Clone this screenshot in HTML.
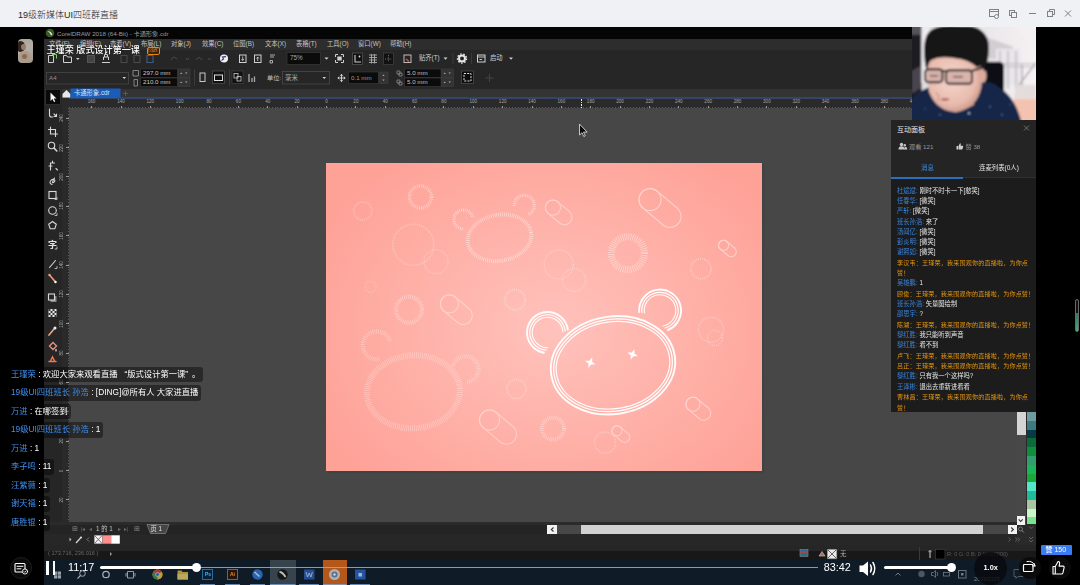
<!DOCTYPE html>
<html lang="zh-CN">
<head>
<meta charset="utf-8">
<title>19级新媒体UI四班群直播</title>
<style>
*{box-sizing:border-box;margin:0;padding:0}
html,body{width:1080px;height:585px;overflow:hidden;background:#000}
body{font-family:"Liberation Sans","Noto Sans CJK SC",sans-serif;color:#fff;position:relative}
.abs{position:absolute}
.abs *{position:absolute}
svg{position:absolute;overflow:visible}
span.t{position:static}
#topbar{left:0;top:0;width:1080px;height:27px;background:#eff1f4}
#topbar .title{left:18px;top:7.600px;font-size:9px;line-height:14px;color:#23262b;font-weight:300;white-space:nowrap}
#stage{left:0;top:0;width:1080px;height:585px;overflow:hidden}
#screen{left:44px;top:27px;width:992px;height:558px;background:#474747;overflow:hidden}
#in{left:-44px;top:-27px;width:1080px;height:585px;filter:blur(.5px)}
.tx{white-space:nowrap;line-height:1;color:#bdbdbd;font-size:6.3px}
.chat{left:8px;height:15.400px;padding:0 3px;border-radius:3px;background:rgba(0,0,0,.42);font-size:8.300px;line-height:15.400px;white-space:nowrap;color:#fff;filter:blur(.25px)}
</style>
</head>
<body>
<div id="topbar" class="abs">
  <div class="title">19级新媒体UI四班群直播</div>
  <svg style="left:986px;top:5px" width="90" height="18" viewBox="986 5 90 18" fill="none" stroke="#7c828a" stroke-width="1">
    <rect x="989.5" y="9.500" width="9" height="7"/><line x1="989.5" y1="11.500" x2="998.500" y2="11.500"/><circle cx="996.500" cy="16.500" r="2" fill="#eff1f4"/>
    <rect x="1009.5" y="10.500" width="5" height="5"/><rect x="1011.5" y="12.500" width="5" height="5" fill="#eff1f4"/>
    <line x1="1029" y1="13.500" x2="1036" y2="13.500"/>
    <rect x="1047.5" y="11.500" width="5" height="5"/><path d="M1049.5 11.500v-2h5v5h-2"/>
    <path d="M1065 10.500l6 6M1071 10.500l-6 6"/>
  </svg>
</div>
<div id="stage" class="abs">
<div id="screen" class="abs"><div id="in" class="abs">
<div style="left:44px;top:27px;width:992px;height:11.5px;background:#050505;"></div>
<div style="left:44px;top:38.5px;width:992px;height:11.5px;background:#2d2d2d;"></div>
<div style="left:44px;top:50px;width:992px;height:16.5px;background:#262626;"></div>
<div style="left:44px;top:66.5px;width:992px;height:22px;background:#262626;"></div>
<div style="left:44px;top:88.5px;width:992px;height:9px;background:#343434;"></div>
<div style="left:44px;top:97.2px;width:992px;height:1.8px;background:#33466a;"></div>
<div style="left:44px;top:99px;width:992px;height:9.3px;background:#2a2a2a;"></div>
<svg style="left:45px;top:28px" width="10" height="10" viewBox="0 0 10 10"><circle cx="5" cy="5" r="4.300" fill="#3a5c26"/><path d="M2.500 3.500Q5 2 7.500 6.500L6 7.500Q5 4 2.500 3.500z" fill="#e8f0e0"/></svg>
<div class="tx" style="left:57px;top:30.70px;font-size:6.2px;color:#9a9a9a;">CorelDRAW 2018 (64-Bit) - 卡通形象.cdr</div>
<div class="tx" style="left:49px;top:41.15px;font-size:6.3px;color:#c4c4c4;">文件(F)</div>
<div class="tx" style="left:80px;top:41.15px;font-size:6.3px;color:#c4c4c4;">编辑(E)</div>
<div class="tx" style="left:110px;top:41.15px;font-size:6.3px;color:#c4c4c4;">查看(V)</div>
<div class="tx" style="left:141px;top:41.15px;font-size:6.3px;color:#c4c4c4;">布局(L)</div>
<div class="tx" style="left:171px;top:41.15px;font-size:6.3px;color:#c4c4c4;">对象(J)</div>
<div class="tx" style="left:202px;top:41.15px;font-size:6.3px;color:#c4c4c4;">效果(C)</div>
<div class="tx" style="left:233px;top:41.15px;font-size:6.3px;color:#c4c4c4;">位图(B)</div>
<div class="tx" style="left:265px;top:41.15px;font-size:6.3px;color:#c4c4c4;">文本(X)</div>
<div class="tx" style="left:296px;top:41.15px;font-size:6.3px;color:#c4c4c4;">表格(T)</div>
<div class="tx" style="left:327px;top:41.15px;font-size:6.3px;color:#c4c4c4;">工具(O)</div>
<div class="tx" style="left:358px;top:41.15px;font-size:6.3px;color:#c4c4c4;">窗口(W)</div>
<div class="tx" style="left:390px;top:41.15px;font-size:6.3px;color:#c4c4c4;">帮助(H)</div>
<svg style="left:0;top:0" width="1080" height="585" viewBox="0 0 1080 585" fill="none" stroke="#d0d0d0" stroke-width="1">
<!-- standard toolbar y 50-66, centre 58.5 -->
<g>
<path d="M48.500 55.500h5v7h-5z"/><path d="M52 54.500h4.500v4" stroke="#7fd06a"/>
<path d="M63.500 62.500v-7h3l1 1.500h4v5.500z"/><path d="M76 58l1.800 2 1.800-2z" fill="#cfcfcf" stroke="none"/>
<rect x="87.500" y="55.500" width="7" height="7" stroke="#555" fill="#444"/>
<path d="M102 62.500h8M103.500 60v-3h5v3M104.500 57v-2.500h3v2.500"/>
<g stroke="#4a4a4a"><rect x="121" y="55.500" width="6" height="7"/><rect x="134" y="55.500" width="6" height="7"/><rect x="147" y="55.500" width="6" height="7" stroke="#40608a"/><path d="M171 60q2-5 6-1M186 58l1.500 2 1.500-2M196 60q3-5 6 0M208 58l1.500 2 1.500-2"/></g>
<circle cx="224" cy="58.500" r="4" fill="#f2f2f2" stroke="none"/><path d="M221.500 60.500l2-1.500-1-2 3.500-0.500" stroke="#5a3aa0" stroke-width="1.300"/>
<rect x="239.500" y="55" width="6.500" height="7.500"/><path d="M242.700 56.500v4M241.500 59l1.200 1.500 1.200-1.500" stroke-width=".8"/>
<rect x="254.500" y="55" width="6.500" height="7.500"/><path d="M257.700 61v-4M256.500 58.500l1.200-1.500 1.200 1.500" stroke-width=".8"/>
<path d="M270 55h5M270 57h4M270 60.500h2.500v2.500h-2.500z" stroke="#bbb" stroke-width=".9"/>
<rect x="287" y="52.500" width="33.500" height="12" fill="#0b0b0b" stroke="#3a3a3a" stroke-width=".7"/>
<path d="M324.500 57.500l2 2.300 2-2.300z" fill="#cfcfcf" stroke="none"/>
<path d="M335.500 57v-2.500h2.500M341 54.500h2.500v2.500M343.500 60v2.500h-2.500M338 62.500h-2.500v-2.500"/><rect x="337.300" y="56.500" width="4.400" height="4" fill="#d0d0d0" stroke="none"/>
<rect x="352.500" y="53" width="10" height="11.500" fill="#111" stroke="#5a5a5a" stroke-width=".7"/><path d="M355 55v7h6" stroke-width="1.100"/><circle cx="359.500" cy="56.500" r=".9" fill="#ddd" stroke="none"/>
<path d="M369 55h8M369 57.500h8M369 60h8M369 62.500h8M371.500 54v9.500M374.500 54v9.500" stroke="#aaa" stroke-width=".9"/>
<rect x="383.500" y="53" width="10" height="11.500" fill="#111" stroke="#444" stroke-width=".7"/><path d="M385 59h7M388.500 55v7" stroke="#777" stroke-width=".8" stroke-dasharray="1.200 1"/>
<rect x="404" y="55" width="7" height="7.500" stroke="#bbb"/><path d="M406 59l3 2.500" stroke="#e05050" stroke-width="1.300"/>
<path d="M443.500 57.500l2 2.300 2-2.300z" fill="#cfcfcf" stroke="none"/>
<line x1="453" y1="53" x2="453" y2="64" stroke="#3a3a3a"/>
<circle cx="462" cy="58.500" r="3" stroke="#e8e8e8" stroke-width="2"/><circle cx="462" cy="58.500" r="4.600" stroke="#e8e8e8" stroke-width="1.200" stroke-dasharray="1.600 1.600"/>
<line x1="471.500" y1="53" x2="471.500" y2="64" stroke="#3a3a3a"/>
<rect x="477.500" y="55" width="7.500" height="7"/><path d="M477.500 57h7.500M479.500 59.500h2.500" stroke-width=".9"/>
<path d="M509 57.500l2 2.300 2-2.300z" fill="#cfcfcf" stroke="none"/>
</g>
<!-- property bar y 66.5-88.5 -->
<g>
<rect x="46.500" y="72.500" width="82" height="11.500" fill="#262626" stroke="#474747" stroke-width=".8"/>
<path d="M122.500 77l1.800 2 1.800-2z" fill="#cfcfcf" stroke="none"/>
<path d="M133 70.500h5.500v5.500h-5.500z" stroke="#999" stroke-width=".8"/><path d="M134 79.500h3.500v6.500h-3.500z" stroke="#999" stroke-width=".8"/>
<rect x="140.500" y="69" width="37" height="8.500" fill="#0b0b0b" stroke="#3c3c3c" stroke-width=".6"/>
<rect x="140.500" y="78" width="37" height="8.500" fill="#0b0b0b" stroke="#3c3c3c" stroke-width=".6"/>
<rect x="178" y="69" width="12" height="8.500" fill="#333" stroke="#414141" stroke-width=".6"/>
<rect x="178" y="78" width="12" height="8.500" fill="#333" stroke="#414141" stroke-width=".6"/>
<path d="M180 74l1.200-1.500 1.200 1.500zM185 72.500l1.200 1.500 1.200-1.500zM180 83l1.200-1.500 1.200 1.500zM185 81.500l1.200 1.500 1.200-1.500z" fill="#aaa" stroke="none"/>
<line x1="194.500" y1="69" x2="194.500" y2="86" stroke="#3a3a3a"/>
<rect x="200" y="73" width="5" height="8.500" stroke="#c8c8c8"/>
<rect x="212.500" y="71" width="12" height="12.500" fill="#101010" stroke="#555" stroke-width=".7"/><rect x="214.500" y="75" width="8" height="5.500" stroke="#ddd"/>
<line x1="229.500" y1="69" x2="229.500" y2="86" stroke="#3a3a3a"/>
<rect x="232" y="71" width="11" height="12.500" fill="#101010" stroke="#444" stroke-width=".7"/><rect x="234" y="73.500" width="4" height="4.500" stroke="#ccc" stroke-width=".8"/><rect x="237" y="76.500" width="4" height="4.500" stroke="#ccc" stroke-width=".8"/>
<path d="M249 74v8M252 78v4M254.500 76.500v5.500" stroke="#aaa" stroke-width="1.300"/>
<rect x="282.500" y="71.500" width="47" height="12.500" fill="#262626" stroke="#4a4a4a" stroke-width=".8"/>
<path d="M322.500 77l1.800 2 1.800-2z" fill="#cfcfcf" stroke="none"/>
<path d="M341.500 74.500v7M338 78h7M340.300 75.700l1.200-1.400 1.200 1.400M340.300 80.300l1.200 1.400 1.200-1.400M339.200 76.800l-1.400 1.200 1.400 1.200M343.800 76.800l1.400 1.200-1.400 1.200" stroke="#ddd" stroke-width=".9"/>
<rect x="348.500" y="72" width="30" height="11.500" fill="#0b0b0b" stroke="#3c3c3c" stroke-width=".6"/>
<rect x="379" y="72" width="9" height="11.500" fill="#333" stroke="#414141" stroke-width=".6"/>
<path d="M382.300 76l1.200-1.500 1.200 1.500zM382.300 79.500l1.200 1.500 1.200-1.500z" fill="#aaa" stroke="none"/>
<path d="M397 71h3v3h-3zM399 73h3v3h-3zM397 80h3v3h-3zM399 82h3v3h-3z" stroke="#999" stroke-width=".7"/>
<rect x="404.500" y="69" width="36.500" height="8.500" fill="#0b0b0b" stroke="#3c3c3c" stroke-width=".6"/>
<rect x="404.500" y="78" width="36.500" height="8.500" fill="#0b0b0b" stroke="#3c3c3c" stroke-width=".6"/>
<rect x="441.500" y="69" width="12" height="8.500" fill="#333" stroke="#414141" stroke-width=".6"/>
<rect x="441.500" y="78" width="12" height="8.500" fill="#333" stroke="#414141" stroke-width=".6"/>
<path d="M443.500 74l1.200-1.500 1.200 1.500zM448.500 72.500l1.200 1.500 1.200-1.500zM443.500 83l1.200-1.500 1.200 1.500zM448.500 81.500l1.200 1.500 1.200-1.500z" fill="#aaa" stroke="none"/>
<rect x="461.500" y="71" width="12" height="12.500" fill="#0d0d0d" stroke="#555" stroke-width=".7"/><rect x="464" y="73.500" width="7" height="7.500" stroke="#e0e0e0" stroke-dasharray="2 1.200"/>
<path d="M489.500 74v8M485.500 78h8" stroke="#444"/>
</g>
<!-- tab row -->
<g>
<path d="M62.500 94l4-4 4 4v3.500h-8z" fill="#e8e8e8" stroke="none"/>
<rect x="70.500" y="88.500" width="50" height="9.500" fill="#1a5db8" stroke="none"/>
<path d="M125.500 91v5M123 93.500h5" stroke="#555"/>
</g>
</svg>
<div class="tx" style="left:290px;top:55.45px;font-size:6.3px;color:#a8a8a8;">75%</div>
<div class="tx" style="left:419px;top:55.45px;font-size:6.3px;color:#d0d0d0;">贴齐(T)</div>
<div class="tx" style="left:490px;top:55.45px;font-size:6.3px;color:#d0d0d0;">启动</div>
<div class="tx" style="left:49px;top:75.20px;font-size:6.2px;color:#8e8e8e;">A4</div>
<div class="tx" style="left:143px;top:70.20px;font-size:6.2px;color:#c8c8c8;">297.0 mm</div>
<div class="tx" style="left:143px;top:79.20px;font-size:6.2px;color:#c8c8c8;">210.0 mm</div>
<div class="tx" style="left:267px;top:74.70px;font-size:6.2px;color:#c0c0c0;">单位:</div>
<div class="tx" style="left:285px;top:74.60px;font-size:6.4px;color:#b0b0b0;">毫米</div>
<div class="tx" style="left:351px;top:74.70px;font-size:6.2px;color:#9a9a9a;">0.1 mm</div>
<div class="tx" style="left:407px;top:70.20px;font-size:6.2px;color:#c0c0c0;">5.0 mm</div>
<div class="tx" style="left:407px;top:79.20px;font-size:6.2px;color:#c0c0c0;">5.0 mm</div>
<div class="tx" style="left:74px;top:90.15px;font-size:6.3px;color:#d6e4f8;">卡通形象.cdr</div>
<div style="left:91.1px;top:105.500px;width:1px;height:2.800px;background:#9a9a9a"></div>
<div class="tx" style="left:81.6px;top:100.400px;width:20px;text-align:center;font-size:4.600px;color:#a4a4a4">160</div>
<div style="left:120.5px;top:105.500px;width:1px;height:2.800px;background:#9a9a9a"></div>
<div class="tx" style="left:111.0px;top:100.400px;width:20px;text-align:center;font-size:4.600px;color:#a4a4a4">140</div>
<div style="left:149.8px;top:105.500px;width:1px;height:2.800px;background:#9a9a9a"></div>
<div class="tx" style="left:140.3px;top:100.400px;width:20px;text-align:center;font-size:4.600px;color:#a4a4a4">120</div>
<div style="left:179.2px;top:105.500px;width:1px;height:2.800px;background:#9a9a9a"></div>
<div class="tx" style="left:169.7px;top:100.400px;width:20px;text-align:center;font-size:4.600px;color:#a4a4a4">100</div>
<div style="left:208.6px;top:105.500px;width:1px;height:2.800px;background:#9a9a9a"></div>
<div class="tx" style="left:199.1px;top:100.400px;width:20px;text-align:center;font-size:4.600px;color:#a4a4a4">80</div>
<div style="left:237.9px;top:105.500px;width:1px;height:2.800px;background:#9a9a9a"></div>
<div class="tx" style="left:228.4px;top:100.400px;width:20px;text-align:center;font-size:4.600px;color:#a4a4a4">60</div>
<div style="left:267.3px;top:105.500px;width:1px;height:2.800px;background:#9a9a9a"></div>
<div class="tx" style="left:257.8px;top:100.400px;width:20px;text-align:center;font-size:4.600px;color:#a4a4a4">40</div>
<div style="left:296.6px;top:105.500px;width:1px;height:2.800px;background:#9a9a9a"></div>
<div class="tx" style="left:287.1px;top:100.400px;width:20px;text-align:center;font-size:4.600px;color:#a4a4a4">20</div>
<div style="left:326.0px;top:105.500px;width:1px;height:2.800px;background:#9a9a9a"></div>
<div class="tx" style="left:316.5px;top:100.400px;width:20px;text-align:center;font-size:4.600px;color:#a4a4a4">0</div>
<div style="left:355.4px;top:105.500px;width:1px;height:2.800px;background:#9a9a9a"></div>
<div class="tx" style="left:345.9px;top:100.400px;width:20px;text-align:center;font-size:4.600px;color:#a4a4a4">20</div>
<div style="left:384.7px;top:105.500px;width:1px;height:2.800px;background:#9a9a9a"></div>
<div class="tx" style="left:375.2px;top:100.400px;width:20px;text-align:center;font-size:4.600px;color:#a4a4a4">40</div>
<div style="left:414.1px;top:105.500px;width:1px;height:2.800px;background:#9a9a9a"></div>
<div class="tx" style="left:404.6px;top:100.400px;width:20px;text-align:center;font-size:4.600px;color:#a4a4a4">60</div>
<div style="left:443.4px;top:105.500px;width:1px;height:2.800px;background:#9a9a9a"></div>
<div class="tx" style="left:433.9px;top:100.400px;width:20px;text-align:center;font-size:4.600px;color:#a4a4a4">80</div>
<div style="left:472.8px;top:105.500px;width:1px;height:2.800px;background:#9a9a9a"></div>
<div class="tx" style="left:463.3px;top:100.400px;width:20px;text-align:center;font-size:4.600px;color:#a4a4a4">100</div>
<div style="left:502.2px;top:105.500px;width:1px;height:2.800px;background:#9a9a9a"></div>
<div class="tx" style="left:492.7px;top:100.400px;width:20px;text-align:center;font-size:4.600px;color:#a4a4a4">120</div>
<div style="left:531.5px;top:105.500px;width:1px;height:2.800px;background:#9a9a9a"></div>
<div class="tx" style="left:522.0px;top:100.400px;width:20px;text-align:center;font-size:4.600px;color:#a4a4a4">140</div>
<div style="left:560.9px;top:105.500px;width:1px;height:2.800px;background:#9a9a9a"></div>
<div class="tx" style="left:551.4px;top:100.400px;width:20px;text-align:center;font-size:4.600px;color:#a4a4a4">160</div>
<div style="left:590.2px;top:105.500px;width:1px;height:2.800px;background:#9a9a9a"></div>
<div class="tx" style="left:580.7px;top:100.400px;width:20px;text-align:center;font-size:4.600px;color:#a4a4a4">180</div>
<div style="left:619.6px;top:105.500px;width:1px;height:2.800px;background:#9a9a9a"></div>
<div class="tx" style="left:610.1px;top:100.400px;width:20px;text-align:center;font-size:4.600px;color:#a4a4a4">200</div>
<div style="left:649.0px;top:105.500px;width:1px;height:2.800px;background:#9a9a9a"></div>
<div class="tx" style="left:639.5px;top:100.400px;width:20px;text-align:center;font-size:4.600px;color:#a4a4a4">220</div>
<div style="left:678.3px;top:105.500px;width:1px;height:2.800px;background:#9a9a9a"></div>
<div class="tx" style="left:668.8px;top:100.400px;width:20px;text-align:center;font-size:4.600px;color:#a4a4a4">240</div>
<div style="left:707.7px;top:105.500px;width:1px;height:2.800px;background:#9a9a9a"></div>
<div class="tx" style="left:698.2px;top:100.400px;width:20px;text-align:center;font-size:4.600px;color:#a4a4a4">260</div>
<div style="left:737.0px;top:105.500px;width:1px;height:2.800px;background:#9a9a9a"></div>
<div class="tx" style="left:727.5px;top:100.400px;width:20px;text-align:center;font-size:4.600px;color:#a4a4a4">280</div>
<div style="left:766.4px;top:105.500px;width:1px;height:2.800px;background:#9a9a9a"></div>
<div class="tx" style="left:756.9px;top:100.400px;width:20px;text-align:center;font-size:4.600px;color:#a4a4a4">300</div>
<div style="left:795.8px;top:105.500px;width:1px;height:2.800px;background:#9a9a9a"></div>
<div class="tx" style="left:786.3px;top:100.400px;width:20px;text-align:center;font-size:4.600px;color:#a4a4a4">320</div>
<div style="left:825.1px;top:105.500px;width:1px;height:2.800px;background:#9a9a9a"></div>
<div class="tx" style="left:815.6px;top:100.400px;width:20px;text-align:center;font-size:4.600px;color:#a4a4a4">340</div>
<div style="left:854.5px;top:105.500px;width:1px;height:2.800px;background:#9a9a9a"></div>
<div class="tx" style="left:845.0px;top:100.400px;width:20px;text-align:center;font-size:4.600px;color:#a4a4a4">360</div>
<div style="left:883.8px;top:105.500px;width:1px;height:2.800px;background:#9a9a9a"></div>
<div class="tx" style="left:874.3px;top:100.400px;width:20px;text-align:center;font-size:4.600px;color:#a4a4a4">380</div>
<div style="left:913.2px;top:105.500px;width:1px;height:2.800px;background:#9a9a9a"></div>
<div class="tx" style="left:903.7px;top:100.400px;width:20px;text-align:center;font-size:4.600px;color:#a4a4a4">400</div>
<div style="left:942.6px;top:105.500px;width:1px;height:2.800px;background:#9a9a9a"></div>
<div class="tx" style="left:933.1px;top:100.400px;width:20px;text-align:center;font-size:4.600px;color:#a4a4a4">420</div>
<div style="left:971.9px;top:105.500px;width:1px;height:2.800px;background:#9a9a9a"></div>
<div class="tx" style="left:962.4px;top:100.400px;width:20px;text-align:center;font-size:4.600px;color:#a4a4a4">440</div>
<div style="left:1001.3px;top:105.500px;width:1px;height:2.800px;background:#9a9a9a"></div>
<div class="tx" style="left:991.8px;top:100.400px;width:20px;text-align:center;font-size:4.600px;color:#a4a4a4">460</div>
<div style="left:69px;top:107.300px;width:967px;height:1.200px;background:repeating-linear-gradient(90deg,#8a8a8a 0,#8a8a8a 1px,transparent 1px,transparent 2.936px);opacity:.5"></div>
<div style="left:580.500px;top:99px;width:1px;height:9px;background:repeating-linear-gradient(180deg,#e8e8e8 0,#e8e8e8 1.500px,transparent 1.500px,transparent 2.500px)"></div><!--marker-->
<div style="left:44px;top:88.5px;width:18px;height:434px;background:#262626;"></div>
<div style="left:62px;top:98.3px;width:7px;height:424px;background:#2a2a2a;"></div>
<div style="left:62px;top:98.3px;width:7px;height:9.7px;background:#2a2a2a;"></div>
<div style="left:66.2px;top:499.4px;width:2.8px;height:1px;background:#9a9a9a;"></div>
<div class="tx" style="left:58.800px;top:495.9px;width:10px;height:8px;font-size:4.600px;color:#a8a8a8;transform:rotate(-90deg);transform-origin:50% 50%;text-align:center">20</div>
<div style="left:66.2px;top:470.0px;width:2.8px;height:1px;background:#9a9a9a;"></div>
<div class="tx" style="left:58.800px;top:466.5px;width:10px;height:8px;font-size:4.600px;color:#a8a8a8;transform:rotate(-90deg);transform-origin:50% 50%;text-align:center">0</div>
<div style="left:66.2px;top:440.6px;width:2.8px;height:1px;background:#9a9a9a;"></div>
<div class="tx" style="left:58.800px;top:437.1px;width:10px;height:8px;font-size:4.600px;color:#a8a8a8;transform:rotate(-90deg);transform-origin:50% 50%;text-align:center">20</div>
<div style="left:66.2px;top:411.3px;width:2.8px;height:1px;background:#9a9a9a;"></div>
<div class="tx" style="left:58.800px;top:407.8px;width:10px;height:8px;font-size:4.600px;color:#a8a8a8;transform:rotate(-90deg);transform-origin:50% 50%;text-align:center">40</div>
<div style="left:66.2px;top:381.9px;width:2.8px;height:1px;background:#9a9a9a;"></div>
<div class="tx" style="left:58.800px;top:378.4px;width:10px;height:8px;font-size:4.600px;color:#a8a8a8;transform:rotate(-90deg);transform-origin:50% 50%;text-align:center">60</div>
<div style="left:66.2px;top:352.6px;width:2.8px;height:1px;background:#9a9a9a;"></div>
<div class="tx" style="left:58.800px;top:349.1px;width:10px;height:8px;font-size:4.600px;color:#a8a8a8;transform:rotate(-90deg);transform-origin:50% 50%;text-align:center">80</div>
<div style="left:66.2px;top:323.2px;width:2.8px;height:1px;background:#9a9a9a;"></div>
<div class="tx" style="left:58.800px;top:319.7px;width:10px;height:8px;font-size:4.600px;color:#a8a8a8;transform:rotate(-90deg);transform-origin:50% 50%;text-align:center">100</div>
<div style="left:66.2px;top:293.8px;width:2.8px;height:1px;background:#9a9a9a;"></div>
<div class="tx" style="left:58.800px;top:290.3px;width:10px;height:8px;font-size:4.600px;color:#a8a8a8;transform:rotate(-90deg);transform-origin:50% 50%;text-align:center">120</div>
<div style="left:66.2px;top:264.5px;width:2.8px;height:1px;background:#9a9a9a;"></div>
<div class="tx" style="left:58.800px;top:261.0px;width:10px;height:8px;font-size:4.600px;color:#a8a8a8;transform:rotate(-90deg);transform-origin:50% 50%;text-align:center">140</div>
<div style="left:66.2px;top:235.1px;width:2.8px;height:1px;background:#9a9a9a;"></div>
<div class="tx" style="left:58.800px;top:231.6px;width:10px;height:8px;font-size:4.600px;color:#a8a8a8;transform:rotate(-90deg);transform-origin:50% 50%;text-align:center">160</div>
<div style="left:66.2px;top:205.8px;width:2.8px;height:1px;background:#9a9a9a;"></div>
<div class="tx" style="left:58.800px;top:202.3px;width:10px;height:8px;font-size:4.600px;color:#a8a8a8;transform:rotate(-90deg);transform-origin:50% 50%;text-align:center">180</div>
<div style="left:66.2px;top:176.4px;width:2.8px;height:1px;background:#9a9a9a;"></div>
<div class="tx" style="left:58.800px;top:172.9px;width:10px;height:8px;font-size:4.600px;color:#a8a8a8;transform:rotate(-90deg);transform-origin:50% 50%;text-align:center">200</div>
<div style="left:66.2px;top:147.0px;width:2.8px;height:1px;background:#9a9a9a;"></div>
<div class="tx" style="left:58.800px;top:143.5px;width:10px;height:8px;font-size:4.600px;color:#a8a8a8;transform:rotate(-90deg);transform-origin:50% 50%;text-align:center">220</div>
<div style="left:66.2px;top:117.7px;width:2.8px;height:1px;background:#9a9a9a;"></div>
<div class="tx" style="left:58.800px;top:114.2px;width:10px;height:8px;font-size:4.600px;color:#a8a8a8;transform:rotate(-90deg);transform-origin:50% 50%;text-align:center">240</div>
<div style="left:67.800px;top:108px;width:1.200px;height:414px;background:repeating-linear-gradient(180deg,#8a8a8a 0,#8a8a8a 1px,transparent 1px,transparent 2.936px);opacity:.5"></div>
<div id="page" style="left:325.500px;top:163px;width:436.300px;height:307.600px;box-shadow:2px 2px 1px rgba(52,62,62,.45);background:radial-gradient(ellipse 60% 68% at 52% 54%,#ffc2bc 0%,#feb2a9 50%,#fea298 100%)"></div>
<svg style="left:0;top:0" width="1080" height="585" viewBox="0 0 1080 585" fill="none" stroke="#fff" stroke-linecap="round">
<circle cx="413.4" cy="244.8" r="20.5" stroke-width="1.6" stroke-dasharray="0.7 1.300" stroke-linecap="butt" opacity="0.42"/>
<circle cx="436" cy="261.7" r="12" stroke-width="1.4" stroke-dasharray="0.7 1.300" stroke-linecap="butt" opacity="0.38"/>
<circle cx="420.5" cy="197" r="11" stroke-width="3.6" stroke-dasharray="0.7 1.300" stroke-linecap="butt" opacity="0.5"/>
<circle cx="362.7" cy="211" r="9" stroke-width="2.2" stroke-dasharray="0.7 1.300" stroke-linecap="butt" opacity="0.33"/>
<circle cx="558.7" cy="264.5" r="14.5" stroke-width="1.5" stroke-dasharray="0.7 1.300" stroke-linecap="butt" opacity="0.4"/>
<circle cx="574" cy="280" r="11.5" stroke-width="1.5" stroke-dasharray="0.7 1.300" stroke-linecap="butt" opacity="0.38"/>
<circle cx="627.8" cy="253.3" r="16.5" stroke-width="7" stroke-dasharray="0.7 1.300" stroke-linecap="butt" opacity="0.5"/>
<circle cx="701" cy="268.8" r="10" stroke-width="2" stroke-dasharray="0.7 1.300" stroke-linecap="butt" opacity="0.4"/>
<circle cx="409" cy="309.7" r="13" stroke-width="4" stroke-dasharray="0.7 1.300" stroke-linecap="butt" opacity="0.48"/>
<circle cx="515" cy="299.8" r="10" stroke-width="2.5" stroke-dasharray="0.7 1.300" stroke-linecap="butt" opacity="0.38"/>
<circle cx="711" cy="329.7" r="12.5" stroke-width="1.5" stroke-dasharray="0.7 1.300" stroke-linecap="butt" opacity="0.42"/>
<circle cx="715" cy="338" r="7.5" stroke-width="1.5" stroke-dasharray="0.7 1.300" stroke-linecap="butt" opacity="0.38"/>
<circle cx="516.4" cy="389" r="9.5" stroke-width="2" stroke-dasharray="0.7 1.300" stroke-linecap="butt" opacity="0.38"/>
<circle cx="553" cy="428.5" r="11" stroke-width="4" stroke-dasharray="0.7 1.300" stroke-linecap="butt" opacity="0.48"/>
<circle cx="605" cy="442.6" r="10.5" stroke-width="1.6" stroke-dasharray="0.7 1.300" stroke-linecap="butt" opacity="0.42"/>
<circle cx="370.6" cy="287" r="5.5" stroke-width="1.5" stroke-dasharray="0.7 1.300" stroke-linecap="butt" opacity="0.33"/>
<g transform="translate(558.7 212.4) rotate(40)" opacity="0.42" stroke-width="1.100" stroke-dasharray="0.8 1"><rect x="-15.0" y="-7.5" width="30" height="15.0" rx="7.5"/><circle cx="-7.5" cy="0" r="7.5"/></g>
<g transform="translate(660 208) rotate(40)" opacity="0.5" stroke-width="1.100" stroke-dasharray="0.8 1"><rect x="-24.0" y="-11" width="48" height="22" rx="11"/><circle cx="-13.0" cy="0" r="11"/></g>
<g transform="translate(727.4 248.5) rotate(40)" opacity="0.5" stroke-width="1.100" stroke-dasharray="0.8 1"><rect x="-10.0" y="-5" width="20" height="10" rx="5"/><circle cx="-5.0" cy="0" r="5"/></g>
<g transform="translate(456.3 309.7) rotate(40)" opacity="0.4" stroke-width="1.100" stroke-dasharray="0.8 1"><rect x="-18.0" y="-9" width="36" height="18" rx="9"/><circle cx="-9.0" cy="0" r="9"/></g>
<g transform="translate(498 427) rotate(40)" opacity="0.4" stroke-width="1.100" stroke-dasharray="0.8 1"><rect x="-21.0" y="-10" width="42" height="20" rx="10"/><circle cx="-11.0" cy="0" r="10"/></g>
<g transform="translate(698.3 408.7) rotate(40)" opacity="0.45" stroke-width="1.100" stroke-dasharray="0.8 1"><rect x="-14.0" y="-7" width="28" height="14" rx="7"/><circle cx="-7.0" cy="0" r="7"/></g>
<g transform="translate(620.8 434) rotate(40)" opacity="0.42" stroke-width="1.100" stroke-dasharray="0.8 1"><rect x="-10.0" y="-5" width="20" height="10" rx="5"/><circle cx="-5.0" cy="0" r="5"/></g>
<g opacity=".55" stroke-dasharray="0.7 1.200" stroke-linecap="butt">
<ellipse cx="499.500" cy="237.800" rx="32" ry="23" transform="rotate(-10 499.500 237.800)" stroke-width="3.800"/>
<path d="M462.6 228.9A9.5 9.5 0 1 1 472.8 217.8" stroke-width="3.400"/><path d="M514.3 205.6A10 10 0 1 1 527.7 214.7" stroke-width="3.400"/></g>
<g opacity=".36" stroke-dasharray="0.7 1.200" stroke-linecap="butt">
<ellipse cx="413.400" cy="391.800" rx="46.500" ry="36.500" transform="rotate(-4 413.400 391.800)" stroke-width="6"/>
<path d="M379.2 359.1A14 14 0 1 1 390.3 341.7" stroke-width="4.200"/><path d="M453.0 365.8A13 13 0 1 1 466.7 382.2" stroke-width="4.200"/></g>
<g opacity=".97">
<ellipse cx="613" cy="365.300" rx="62.5" ry="48.8" transform="rotate(-9 613 365.300)" stroke-width="1.9"/>
<ellipse cx="613" cy="365.300" rx="59.6" ry="45.9" transform="rotate(-9 613 365.300)" stroke-width="1.3"/>
<ellipse cx="613" cy="365.300" rx="57.1" ry="43.4" transform="rotate(-9 613 365.300)" stroke-width="1.2"/>
<path d="M543.9 352.7A20.5 20.5 0 1 1 567.8 329.6" stroke-width="1.9"/>
<path d="M639.1 312.0A21 21 0 1 1 667.9 330.0" stroke-width="1.9"/>
<path d="M546.1 350.1A17.7 17.7 0 1 1 565.1 330.9" stroke-width="1.2"/>
<path d="M641.9 312.7A18.2 18.2 0 1 1 665.1 328.0" stroke-width="1.2"/>
<path d="M547.6 347.8A15.3 15.3 0 1 1 562.8 331.8" stroke-width="1.1"/>
<path d="M644.4 313.0A15.8 15.8 0 1 1 663.2 326.0" stroke-width="1.1"/>
<path d="M595.6 364.5L591.2 364.5L588.4 367.9L588.4 363.5L585.0 360.7L589.4 360.7L592.2 357.3L592.2 361.7z" fill="#fff" stroke="none"/>
<path d="M637.9 356.3L633.5 356.3L630.7 359.7L630.7 355.3L627.3 352.5L631.7 352.5L634.5 349.1L634.5 353.5z" fill="#fff" stroke="none"/>
</g></svg>
<svg style="left:0;top:0" width="1080" height="585" viewBox="0 0 1080 585" fill="none" stroke="#d8d8d8" stroke-width="1.100" stroke-linecap="round">
<!-- toolbox icons, centre x 52.5 -->
<rect x="45.500" y="89.500" width="15" height="15" fill="#0a0a0a" stroke="#3c3c3c" stroke-width=".6"/>
<path d="M50.500 92.500v8.500l2-2 1.500 3 1.300-.6-1.500-3h2.700z" fill="#f4f4f4" stroke="none"/>
<path d="M49.500 109v6q0 2 2 2h1M54 114l2.500 2.500M56.500 114v2.500h-2.500" />
<path d="M50.500 127v7h7M48.500 129.500h7v7" />
<circle cx="51.500" cy="145.500" r="3.200"/><path d="M54 148l2.800 3" stroke-width="1.600"/>
<path d="M50.500 170v-7h4M52.500 163v-2M49 166h3" /><path d="M56 168.500l1.500 1.500" />
<path d="M52 184.500q-3-1-1.500-3.500t3.500-1.500q2 1.500-.5 3t1-4.500" />
<rect x="49" y="191.500" width="7" height="7"/><path d="M57 197.500v2h-2" stroke-width=".8"/>
<circle cx="52.500" cy="210.500" r="3.800"/><path d="M57 213.500v2h-2" stroke-width=".8"/>
<path d="M52.500 221.500l3.800 2.800-1.500 4.400h-4.600l-1.500-4.400z"/>
<text x="48" y="248.300" font-size="9" font-family="'Liberation Sans','Noto Sans CJK SC',sans-serif" font-weight="bold" fill="#e4e4e4" stroke="none">字</text><path d="M57 247v2h-2" stroke-width=".8"/>
<path d="M49.500 267.500l6-7"/><path d="M57 266.500v2h-2" stroke-width=".8"/>
<path d="M49.500 275l6 7" stroke="#f0a07a" stroke-width="1.600"/><circle cx="49.500" cy="275" r="1.200" fill="#f0a07a" stroke="none"/><circle cx="55.500" cy="282" r="1.200" fill="#fff" stroke="none"/>
<rect x="50.500" y="296" width="6" height="6" fill="#888" stroke="none"/><rect x="48.500" y="294" width="6" height="6" fill="#262626"/>
<rect x="48.500" y="309" width="8" height="8" fill="#e6e6e6" stroke="none"/><rect x="48.5" y="309" width="2" height="2" fill="#3a3a3a" stroke="none"/><rect x="48.5" y="313" width="2" height="2" fill="#3a3a3a" stroke="none"/><rect x="50.5" y="311" width="2" height="2" fill="#3a3a3a" stroke="none"/><rect x="50.5" y="315" width="2" height="2" fill="#3a3a3a" stroke="none"/><rect x="52.5" y="309" width="2" height="2" fill="#3a3a3a" stroke="none"/><rect x="52.5" y="313" width="2" height="2" fill="#3a3a3a" stroke="none"/><rect x="54.5" y="311" width="2" height="2" fill="#3a3a3a" stroke="none"/><rect x="54.5" y="315" width="2" height="2" fill="#3a3a3a" stroke="none"/>
<path d="M49 335l5-6" stroke="#e8a080" stroke-width="1.700"/><circle cx="55" cy="328" r="1.500" fill="#eee" stroke="none"/>
<path d="M49.500 346l3.500-3.500 3.500 3.500-3.500 3.500z" stroke="#e89080" stroke-width="1.400"/><path d="M56 349.500v1.500" stroke="#fff"/>
<path d="M49 361.500h7M50.500 361l2-4 2 4" stroke="#e87850" stroke-width="1.500"/>
<!-- cursor -->
<path d="M579.500 124.500v10.500l2.500-2.300 1.800 3.800 1.500-.7-1.800-3.700h3.300z" fill="#0a0a0a" stroke="#e8e8e8" stroke-width=".8" stroke-linejoin="round"/>
</svg>
<div style="left:44px;top:522px;width:992px;height:2.5px;background:#2b2b2b;"></div>
<div style="left:44px;top:524.5px;width:992px;height:9.5px;background:#484848;"></div>
<div style="left:44px;top:524.5px;width:503px;height:9.5px;background:#242424;"></div>
<div style="left:547px;top:524.5px;width:10px;height:9.5px;background:#f2f2f2;"></div>
<div style="left:581px;top:524.5px;width:402px;height:9.5px;background:#d2d2d2;"></div>
<div style="left:1008px;top:524.5px;width:8.5px;height:9.5px;background:#f2f2f2;"></div>
<div style="left:44px;top:534px;width:992px;height:11px;background:#272727;"></div>
<div style="left:44px;top:544.5px;width:992px;height:0.8px;background:#343434;"></div>
<div style="left:44px;top:545.3px;width:992px;height:6px;background:#262626;"></div>
<div style="left:44px;top:551px;width:992px;height:9.5px;background:#181818;"></div>
<div style="left:1016.5px;top:108px;width:9.5px;height:416.5px;background:#484848;"></div>
<div style="left:1016.5px;top:400px;width:9.5px;height:35px;background:#d4d4d4;"></div>
<div style="left:1016.5px;top:516px;width:8.5px;height:8.5px;background:#f2f2f2;"></div>
<div style="left:1016.5px;top:524.5px;width:19.5px;height:20px;background:#2a2a2a;"></div>
<div style="left:1026px;top:108px;width:10px;height:437px;background:#2a2a2a;"></div>
<div style="left:1026.5px;top:412px;width:9px;height:8.5px;background:#6d9ba2;"></div>
<div style="left:1026.5px;top:420.5px;width:9px;height:9.5px;background:#3b7b84;"></div>
<div style="left:1026.5px;top:430px;width:9px;height:8px;background:#073a42;"></div>
<div style="left:1026.5px;top:438px;width:9px;height:9px;background:#0b6b3b;"></div>
<div style="left:1026.5px;top:447px;width:9px;height:9px;background:#0f8f3d;"></div>
<div style="left:1026.5px;top:456px;width:9px;height:9px;background:#2f9f70;"></div>
<div style="left:1026.5px;top:465px;width:9px;height:8.5px;background:#1eb45c;"></div>
<div style="left:1026.5px;top:473.5px;width:9px;height:8.5px;background:#19a93b;"></div>
<div style="left:1026.5px;top:482px;width:9px;height:9px;background:#50e8c9;"></div>
<div style="left:1026.5px;top:491px;width:9px;height:9px;background:#1ebc9d;"></div>
<div style="left:1026.5px;top:500px;width:9px;height:9px;background:#a9c5a1;"></div>
<div style="left:1026.5px;top:509px;width:9px;height:7.5px;background:#c9f6c9;"></div>
<div style="left:1026.5px;top:516.5px;width:9px;height:7.5px;background:#7ce18b;"></div>
<div class="tx" style="left:72px;top:526.05px;font-size:6.5px;color:#8a8a8a;">⊞</div>
<div class="tx" style="left:81px;top:526.55px;font-size:5.5px;color:#6a6a6a;">|◂</div>
<div class="tx" style="left:89px;top:526.55px;font-size:5.5px;color:#6a6a6a;">◂</div>
<div class="tx" style="left:96px;top:526.15px;font-size:6.3px;color:#c0c0c0;">1 的 1</div>
<div class="tx" style="left:118px;top:526.55px;font-size:5.5px;color:#6a6a6a;">▸</div>
<div class="tx" style="left:124px;top:526.55px;font-size:5.5px;color:#6a6a6a;">▸|</div>
<div class="tx" style="left:134px;top:526.05px;font-size:6.5px;color:#8a8a8a;">⊞</div>
<svg style="left:0;top:0" width="1080" height="585" viewBox="0 0 1080 585" fill="none" stroke="#bbb" stroke-width="1">
<path d="M147 524.500l3.500 9h15l3.500-9z" fill="#454545" stroke="#8a8a8a" stroke-width=".7"/>
<path d="M553.500 527.500l-2.200 2 2.200 2" stroke="#333" stroke-width="1.100"/><path d="M1011.200 527.500l2.200 2-2.200 2" stroke="#333" stroke-width="1.100"/><path d="M1018.700 519.300l2 2.200 2-2.200" stroke="#333" stroke-width="1.100"/>
<circle cx="1020.500" cy="529" r="2" stroke="#8a8a8a" stroke-width=".8"/><path d="M1022 530.500l1.800 2" stroke="#8a8a8a"/>
<path d="M1029 526.500l2 2 2-2M1029 537l2 2 2-2M1029 540l2 2 2-2" stroke="#666" stroke-width=".9"/>
<path d="M1008.500 537.500l2 2-2 2M1015.500 537.500l1.500 2-1.500 2M1018 537.500l1.500 2-1.500 2" stroke="#666" stroke-width=".9"/>
<path d="M69.500 537.500l2 2-2 2z" fill="#bbb" stroke="none"/><path d="M76 543l4.500-5" stroke="#ccc" stroke-width="1.400"/><circle cx="81" cy="537.500" r="1.100" fill="#ddd" stroke="none"/><path d="M89 537.500l-2 2 2 2" stroke="#777"/>
<rect x="94.300" y="535.300" width="8" height="8.400" fill="#f4f4f4" stroke="#999" stroke-width=".6"/><path d="M94.500 535.500l7.600 8M102.100 535.500l-7.600 8" stroke="#555" stroke-width=".8"/>
<rect x="102.600" y="535.300" width="8.600" height="8.400" fill="#ff8f8f" stroke="none"/><rect x="111.200" y="535.300" width="8.600" height="8.400" fill="#ffffff" stroke="none"/>
<rect x="800" y="549.500" width="8" height="7" fill="#2a6a8a" stroke="#888" stroke-width=".6"/><path d="M800 552h8" stroke="#c04040" stroke-width="1.500"/>
<path d="M819 556l3-4.500 3 4.500z" fill="#b06a50" stroke="#ccc" stroke-width=".6"/>
<rect x="827.300" y="549.300" width="9.500" height="9.500" fill="#e8e8e8" stroke="#888" stroke-width=".6"/><path d="M827.500 549.500l9 9M836.500 549.500l-9 9" stroke="#555" stroke-width=".9"/>
<line x1="919.500" y1="547" x2="919.500" y2="560" stroke="#3a3a3a"/>
<path d="M930 550v8M928.500 551.500h3" stroke="#999" stroke-width="1.400"/>
<rect x="935.500" y="549.500" width="9.500" height="9.500" fill="#000" stroke="#444" stroke-width=".6"/>
<path d="M110 552l2 2-2 2z" fill="#999" stroke="none"/>
</svg>
<div class="tx" style="left:150.5px;top:526.15px;font-size:6.3px;color:#e0e0e0;">页 1</div>
<div class="tx" style="left:48px;top:551.40px;font-size:5.6px;color:#6a6a6a;">( 173.716, 236.016 )</div>
<div class="tx" style="left:840px;top:550.95px;font-size:6.5px;color:#b0b0b0;">无</div>
<div class="tx" style="left:947px;top:551.60px;font-size:5.6px;color:#5a5a5a;">R: 0 G: 0 B: 0 (#000000)</div>
<!-- windows taskbar inside the shared screen -->
<div style="left:44px;top:560px;width:992px;height:25px;background:#0f1b27"></div>
<div style="left:270px;top:560px;width:25.500px;height:25px;background:#37434d"></div>
<div style="left:323px;top:560px;width:23.500px;height:25px;background:#b3571a"></div>
<svg style="left:0;top:0" width="1080" height="585" viewBox="0 0 1080 585" fill="none" stroke="#c8d0d8" stroke-width="1" opacity=".8">
<path d="M54 571.500h3.200v3.200h-3.200zM57.800 571.500h3.200v3.200h-3.200zM54 575.300h3.200v3.200h-3.200zM57.800 575.300h3.200v3.200h-3.200z" fill="#b8c0c8" stroke="none"/>
<circle cx="82.500" cy="573.500" r="2.800"/><path d="M80.500 575.500l-3 3.200" stroke-width="1.200"/>
<circle cx="106" cy="574.500" r="3.200" stroke-width="1.300"/>
<path d="M127.500 571.500h6v6.500h-6zM126 573v3.500M135 573v3.500" stroke-width=".9"/>
<circle cx="157.500" cy="574.500" r="5" fill="#d8b030" stroke="none"/><path d="M157.500 574.500L153.200 572A5 5 0 0 1 161.800 572z" fill="#d04030" stroke="none"/><path d="M157.500 574.500L161.800 572A5 5 0 0 1 157.500 579.500z" fill="#e8c030" stroke="none"/><path d="M157.500 574.500V579.500A5 5 0 0 1 153.200 572z" fill="#3a9a4a" stroke="none"/><circle cx="157.500" cy="574.500" r="2" fill="#3a70c0" stroke="#eee" stroke-width=".6"/>
<path d="M177.500 570.500h4l1 1.500h5.500v7.500h-10.500z" fill="#d8b040" stroke="none"/><rect x="177.500" y="574" width="10.500" height="5.500" fill="#e8cc68" stroke="none"/>
<rect x="202.500" y="569.500" width="10" height="10" fill="#0a2038" stroke="#2a8ac8" stroke-width=".9"/>
<rect x="227.500" y="569.500" width="10" height="10" fill="#2a1408" stroke="#d87020" stroke-width=".9"/>
<circle cx="257.500" cy="574.500" r="5.200" fill="#2a78d0" stroke="none"/><path d="M254.500 572l5 4.500" stroke="#d8e8f8" stroke-width="1.500"/>
<circle cx="282.500" cy="574.500" r="5.200" fill="#0c0c0c" stroke="none"/><path d="M279.500 572q3 0 6 5" stroke="#d8e0d0" stroke-width="1.800"/>
<rect x="304" y="569.500" width="10.500" height="10" fill="#2a5ab0" stroke="none"/><path d="M306 572l1.500 5 1.700-4 1.700 4 1.500-5" stroke="#dce8f8" stroke-width=".8"/>
<circle cx="334.500" cy="574.500" r="5.500" fill="#b8c4cc" stroke="none"/><circle cx="334.500" cy="574.500" r="3" fill="#3a78b8" stroke="none"/><circle cx="334.500" cy="574.500" r="1.200" fill="#e8eef2" stroke="none"/>
<rect x="355" y="569.500" width="10.500" height="10" fill="#2a62c0" stroke="none"/><rect x="358.500" y="573" width="3.500" height="3.500" fill="#c8dcf4" stroke="none"/>
<path d="M200 584.500h15M225 584.500h15M250 584.500h15M270 584.500h25.500M299 584.500h20M323 584.500h23.500M350 584.500h20" stroke="#7aa6d8" stroke-width="1"/>
<path d="M895.500 575.500l2.500-2.500 2.500 2.500" stroke="#8a939c"/>
<circle cx="921.500" cy="574" r="3.200" fill="#5a6670" stroke="none"/>
<path d="M931.500 572.500h2l2-2v7l-2-2h-2zM937 572q1.500 2 0 4" stroke="#8a939c" stroke-width=".8"/>
<rect x="943.500" y="572.500" width="6" height="3.500" stroke="#8a939c" stroke-width=".8"/>
<rect x="958.500" y="570.500" width="7.500" height="7.500" stroke="#8a939c" stroke-width=".9"/><rect x="961" y="573" width="2.500" height="2.500" fill="#8a939c" stroke="none"/>
<path d="M1014 569.500h10v7h-6l-2 2v-2h-2z" stroke="#6a7580" stroke-width=".9"/>
</svg>
<div class="tx" style="left:974px;top:577.200px;font-size:5.800px;color:#7d8790">2020/2/25</div>
<div class="tx" style="left:205px;top:572px;font-size:5px;color:#48b0f0;font-weight:bold">Ps</div>
<div class="tx" style="left:230px;top:572px;font-size:5px;color:#f08a28;font-weight:bold">Ai</div>
<!-- presenter webcam -->
<div id="cam" style="left:912px;top:26.500px;width:124px;height:93.500px;background:#ece6ea;overflow:hidden">
<svg style="left:0;top:0" width="124" height="94" viewBox="912 26.500 124 93.500">
<defs><filter id="cb" x="-10%" y="-10%" width="120%" height="120%"><feGaussianBlur stdDeviation="1.000"/></filter>
<linearGradient id="wall" x1="0" y1="0" x2="1" y2="0"><stop offset="0" stop-color="#dfdbe0"/><stop offset=".45" stop-color="#e6e2e6"/><stop offset="1" stop-color="#f6f2f4"/></linearGradient>
<radialGradient id="face" cx=".45" cy=".45" r=".6"><stop offset="0" stop-color="#f6d6cc"/><stop offset=".7" stop-color="#e8bcae"/><stop offset="1" stop-color="#c89484"/></radialGradient></defs>
<g filter="url(#cb)">
<rect x="908" y="22" width="132" height="102" fill="url(#wall)"/>
<path d="M975 27h40l21 22v-22z" fill="#f4f0f2"/>
<path d="M985 36l28 10v12h-30z" fill="#d2ced2"/>
<rect x="996" y="48" width="24" height="36" fill="#e9e6ea"/>
<path d="M1000 50v38M1008 50v38M1016 50v38" stroke="#c4c0c6" stroke-width="1.600"/>
<path d="M988 63h48M988 66h48" stroke="#b8b4ba" stroke-width="1.200"/>
<path d="M1016 88l20-26M1022 64v30" stroke="#aeaab0" stroke-width="1.500"/>
<path d="M1014 98h24v24h-28z" fill="#f4c2b0"/>
<path d="M1016 84h20v14h-22z" fill="#e4dcdc"/>
<rect x="908" y="22" width="13.500" height="102" fill="#1d1b22"/>
<rect x="908" y="22" width="13.500" height="12" fill="#55535c"/>
<path d="M912 70l9-5v22l-9 6z" fill="#4a4450"/>
<rect x="921.500" y="22" width="8" height="60" fill="#efecef"/>
<rect x="982" y="61" width="22" height="32" rx="5" fill="#0e0e12"/>
<path d="M908 124v-20q6-12 22-18l30-4 24 0q8-2 14 4 18 10 24 38z" fill="#13284a"/>
<path d="M944 98q12 16 30 6l-3-18h-24z" fill="#d4a090"/>
<path d="M926.500 68Q925 50 954 50Q983 50 982.500 68L981.500 86Q977 108 956 111.500Q936 110 929 91z" fill="url(#face)"/>
<ellipse cx="983" cy="75" rx="3.500" ry="7" fill="#dcaa9a"/>
<path d="M925.500 66Q922 44 927 34Q932 25 950 25L972 25.500Q986 29 988.500 42Q989.500 54 987 62L984.500 71Q982 63 977 66.500Q968 58.500 955 57.500Q940 54.500 931 59.500Q928 62 927.500 69z" fill="#131318"/>
<path d="M940 70l10 .5M972 70l10-3" stroke="#1c1a24" stroke-width="2" fill="none"/>
<rect x="925" y="68.500" width="17.500" height="13" rx="3.500" fill="#d6b2aa" stroke="#17151e" stroke-width="1.900"/>
<rect x="946" y="69.500" width="26" height="13.500" rx="3.500" fill="#d8b4ac" stroke="#17151e" stroke-width="1.900"/>
<path d="M930 75h8M953 76h10" stroke="#6a5458" stroke-width="1.600" fill="none"/>
<path d="M940 98.500q5-2.500 10 0-5 3.500-10 0z" fill="#b86466"/>
<path d="M936 92q4 3 2 8" stroke="#c89484" stroke-width="1.200" fill="none"/>
<circle cx="969" cy="112.500" r="1" fill="#c8d4e8"/><circle cx="990" cy="106" r=".7" fill="#7a90b8"/><circle cx="1002" cy="114" r=".7" fill="#7a90b8"/><circle cx="940" cy="114" r=".7" fill="#7a90b8"/><circle cx="1010" cy="104" r=".6" fill="#7a90b8"/><circle cx="925" cy="108" r=".6" fill="#7a90b8"/>
</g>
</svg>
</div>
<div id="panel" style="left:891px;top:120px;width:145px;height:292px;background:#1c1c1c"></div>
<div style="left:891px;top:120px;width:145px;height:58px;background:#242425"></div>
<div style="left:891px;top:177px;width:145px;height:1px;background:#303030"></div>
<div style="left:891px;top:176.500px;width:72px;height:2px;background:#2a6fbe"></div>
<div class="tx" style="left:897px;top:125.90px;font-size:7px;color:#e8e8e8;">互动面板</div>
<svg style="left:0;top:0" width="1080" height="585" viewBox="0 0 1080 585" fill="none"><path d="M1024 125.500l5 5M1029 125.500l-5 5" stroke="#777" stroke-width=".9"/><circle cx="901.500" cy="144.500" r="1.700" fill="#c8c8c8"/><path d="M898.500 149.500q0-3.200 3-3.200t3 3.200z" fill="#c8c8c8"/><circle cx="904.800" cy="145.300" r="1.200" fill="#c8c8c8"/><path d="M904 149.500q.3-2.500 1.500-2.700 1.800.2 1.800 2.700z" fill="#c8c8c8"/><path d="M956.500 146h1.500v3.500h-1.500zM958.500 146l1.500-2.800q1 0 .8 1.300l-.3 1.200h2q.8.200.6 1l-.6 2.300q-.2.500-.8.500h-3.200z" fill="#d0d0d0"/></svg>
<div class="tx" style="left:909px;top:144.10px;font-size:6.2px;color:#9a9a9a;">观看 121</div>
<div class="tx" style="left:965.5px;top:144.10px;font-size:6.2px;color:#9a9a9a;">赞 38</div>
<div class="tx" style="left:921px;top:165.00px;font-size:6.4px;color:#3b8de8;">消息</div>
<div class="tx" style="left:979px;top:165.00px;font-size:6.4px;color:#e4e4e4;">连麦列表(0人)</div>
<div class="tx" style="left:897px;top:187.65px;font-size:6.3px;color:#bdbdbd;"><span class="t" style="color:#3a82d8">杜斌斌:</span> <span class="t" style="color:#e6e6e6">刚时不时卡一下[憨笑]</span></div>
<div class="tx" style="left:897px;top:197.95px;font-size:6.3px;color:#bdbdbd;"><span class="t" style="color:#3a82d8">任春华:</span> <span class="t" style="color:#e6e6e6">[微笑]</span></div>
<div class="tx" style="left:897px;top:208.25px;font-size:6.3px;color:#bdbdbd;"><span class="t" style="color:#3a82d8">严轩:</span> <span class="t" style="color:#e6e6e6">[微笑]</span></div>
<div class="tx" style="left:897px;top:218.55px;font-size:6.3px;color:#bdbdbd;"><span class="t" style="color:#3a82d8">班长孙浩:</span> <span class="t" style="color:#e6e6e6">来了</span></div>
<div class="tx" style="left:897px;top:228.85px;font-size:6.3px;color:#bdbdbd;"><span class="t" style="color:#3a82d8">汤闻亿:</span> <span class="t" style="color:#e6e6e6">[微笑]</span></div>
<div class="tx" style="left:897px;top:239.15px;font-size:6.3px;color:#bdbdbd;"><span class="t" style="color:#3a82d8">彭炎明:</span> <span class="t" style="color:#e6e6e6">[微笑]</span></div>
<div class="tx" style="left:897px;top:249.45px;font-size:6.3px;color:#bdbdbd;"><span class="t" style="color:#3a82d8">谢熙如:</span> <span class="t" style="color:#e6e6e6">[微笑]</span></div>
<div class="tx" style="left:897px;top:259.95px;font-size:6.1px;color:#e8960e;letter-spacing:.15px">李汉韦：王瑾荣，我来围观你的直播啦，为你点</div>
<div class="tx" style="left:897px;top:270.25px;font-size:6.1px;color:#e8960e;letter-spacing:.15px">赞！</div>
<div class="tx" style="left:897px;top:280.35px;font-size:6.3px;color:#bdbdbd;"><span class="t" style="color:#3a82d8">吴雄鹏:</span> <span class="t" style="color:#e6e6e6">1</span></div>
<div class="tx" style="left:897px;top:290.95px;font-size:6.1px;color:#e8960e;letter-spacing:.15px">顾俊：王瑾荣，我来围观你的直播啦，为你点赞！</div>
<div class="tx" style="left:897px;top:301.15px;font-size:6.3px;color:#bdbdbd;"><span class="t" style="color:#3a82d8">班长孙浩:</span> <span class="t" style="color:#e6e6e6">矢量图绘制</span></div>
<div class="tx" style="left:897px;top:311.45px;font-size:6.3px;color:#bdbdbd;"><span class="t" style="color:#3a82d8">邵思宇:</span> <span class="t" style="color:#e6e6e6">?</span></div>
<div class="tx" style="left:897px;top:321.85px;font-size:6.1px;color:#e8960e;letter-spacing:.15px">陈湖：王瑾荣，我来围观你的直播啦，为你点赞！</div>
<div class="tx" style="left:897px;top:332.25px;font-size:6.3px;color:#bdbdbd;"><span class="t" style="color:#3a82d8">黎红胜:</span> <span class="t" style="color:#e6e6e6">我只能听到声音</span></div>
<div class="tx" style="left:897px;top:342.45px;font-size:6.3px;color:#bdbdbd;"><span class="t" style="color:#3a82d8">黎红胜:</span> <span class="t" style="color:#e6e6e6">看不到</span></div>
<div class="tx" style="left:897px;top:352.85px;font-size:6.1px;color:#e8960e;letter-spacing:.15px">卢飞：王瑾荣，我来围观你的直播啦，为你点赞！</div>
<div class="tx" style="left:897px;top:363.05px;font-size:6.1px;color:#e8960e;letter-spacing:.15px">吕正：王瑾荣，我来围观你的直播啦，为你点赞！</div>
<div class="tx" style="left:897px;top:373.45px;font-size:6.3px;color:#bdbdbd;"><span class="t" style="color:#3a82d8">黎红胜:</span> <span class="t" style="color:#e6e6e6">只有我一个这样吗?</span></div>
<div class="tx" style="left:897px;top:383.65px;font-size:6.3px;color:#bdbdbd;"><span class="t" style="color:#3a82d8">王泽彬:</span> <span class="t" style="color:#e6e6e6">退出去重新进看看</span></div>
<div class="tx" style="left:897px;top:394.25px;font-size:6.1px;color:#e8960e;letter-spacing:.15px">曹林昌：王瑾荣，我来围观你的直播啦，为你点</div>
<div class="tx" style="left:897px;top:404.55px;font-size:6.1px;color:#e8960e;letter-spacing:.15px">赞！</div>
</div></div>
<div id="overlay" class="abs" style="left:0;top:0;width:1080px;height:585px">
<div style="left:18px;top:38.500px;width:14.500px;height:24px;border-radius:4px;background:linear-gradient(160deg,#cfc8bc 0%,#ddd6cc 45%,#c2b6a6 100%);overflow:hidden;filter:blur(.5px) brightness(.82)"><div style="left:-2px;top:2px;width:9px;height:11px;border-radius:50%;background:#3c2c22"></div><div style="left:2.500px;top:5px;width:5px;height:6px;border-radius:50%;background:#b89880"></div><div style="left:1px;top:12px;width:11px;height:11px;border-radius:45%;background:#d4bca4"></div><div style="left:4px;top:15px;width:5px;height:5px;border-radius:50%;background:#a88468"></div></div>
<div class="tx" style="left:46.500px;top:46.300px;font-size:9.100px;color:#fff;font-weight:500;text-shadow:0 0 1px rgba(0,0,0,.6)">王瑾荣 版式设计第一课</div>
<div style="left:146.500px;top:47px;width:13.500px;height:7.500px;border:1px solid #e8821e;border-radius:2px;background:#3a2410"></div>
<div class="tx" style="left:148.300px;top:48.400px;font-size:4.800px;color:#f08a20">回放</div>
<div class="chat" style="top:366.8px"><span class="t" style="color:#3f8ff0">王瑾荣</span> : 欢迎大家来观看直播<span class="t" style="margin-left:7px">“版式设计第一课”</span><span class="t" style="margin-left:4px">。</span></div>
<div class="chat" style="top:385.3px"><span class="t" style="color:#3f8ff0">19级UI四班班长 孙浩</span> : [DING]@所有人 大家进直播</div>
<div class="chat" style="top:403.8px"><span class="t" style="color:#3f8ff0">万进</span> : 在哪签到</div>
<div class="chat" style="top:422.3px"><span class="t" style="color:#3f8ff0">19级UI四班班长 孙浩</span> : 1</div>
<div class="chat" style="top:440.8px"><span class="t" style="color:#3f8ff0">万进</span> : 1</div>
<div class="chat" style="top:459.2px"><span class="t" style="color:#3f8ff0">李子鸣</span> : 11</div>
<div class="chat" style="top:477.6px"><span class="t" style="color:#3f8ff0">汪紫薇</span> : 1</div>
<div class="chat" style="top:496.4px"><span class="t" style="color:#3f8ff0">谢天福</span> : 1</div>
<div class="chat" style="top:515.3px"><span class="t" style="color:#3f8ff0">唐胜锟</span> : 1</div>
<div style="left:100px;top:566.800px;width:718px;height:1.500px;background:#9aa8b4;opacity:.9"></div>
<div style="left:100px;top:566px;width:96px;height:3px;background:#fff;border-radius:1.500px"></div>
<div style="left:191.500px;top:563px;width:9px;height:9px;border-radius:50%;background:#fff"></div>
<div style="left:46px;top:561px;width:2.500px;height:14px;background:#fff"></div><div style="left:52.500px;top:561px;width:2.500px;height:14px;background:#fff"></div>
<div class="tx" style="left:68px;top:561.600px;font-size:10.800px;color:#fff">11:17</div>
<div class="tx" style="left:823.800px;top:561.600px;font-size:10.800px;color:#fff">83:42</div>
<div style="left:884px;top:566px;width:67px;height:3px;background:#fff;border-radius:1.500px"></div>
<div style="left:946.500px;top:563px;width:9px;height:9px;border-radius:50%;background:#fff"></div>
<div style="left:9.500px;top:557px;width:22px;height:22px;border-radius:50%;background:#0a0a0a;border:1px solid #1c1c1c"></div>
<div style="left:973.500px;top:551.500px;width:33px;height:33px;border-radius:50%;background:rgba(8,10,14,.82)"></div>
<div style="left:1018.500px;top:557px;width:22px;height:22px;border-radius:50%;background:#0b0b0c"></div>
<div style="left:1048.500px;top:557px;width:22px;height:22px;border-radius:50%;background:#0b0b0c"></div>
<div class="tx" style="left:983.500px;top:563.600px;font-size:7.400px;color:#fff;font-weight:bold">1.0x</div>
<div style="left:1041px;top:544.500px;width:30.500px;height:10.500px;background:#3a7df2;border-radius:1px"></div>
<div class="tx" style="left:1045.500px;top:546.300px;font-size:7px;color:#fff;font-weight:500">赞 150</div>
<div style="left:1074.500px;top:299px;width:4.500px;height:33px;border:1px solid #6a6a6a;border-radius:2px;background:#111"></div><div style="left:1075.500px;top:313px;width:2.500px;height:18px;background:linear-gradient(#2f7a58,#3fae78)"></div>
<svg style="left:0;top:0" width="1080" height="585" viewBox="0 0 1080 585" fill="none" stroke="#fff" stroke-width="1.200" stroke-linejoin="round" stroke-linecap="round">
<rect x="15" y="563.500" width="10" height="8.500" rx="1" stroke-width="1.100"/><path d="M17 566.300h6M17 568.800h4" stroke-width="1"/><circle cx="25" cy="571.500" r="2.600" fill="#0a0a0a" stroke-width=".9"/><path d="M23.900 571.500l.8.800 1.400-1.500" stroke-width=".8"/>
<path d="M859.500 565.500h3.500l5-4v14.500l-5-4h-3.500z" fill="#fff" stroke="none"/><path d="M870.500 565q2 3.500 0 7M873 562.500q3.500 6 0 12" stroke-width="1.500"/>
<rect x="1023.500" y="564.500" width="9.500" height="7" rx=".8"/><path d="M1027 561.500q6-1.200 8 4.500M1034.200 563.500l.9 2.600-2.700-.2" stroke-width="1"/>
<path d="M1053 566.500h2.300v7.500h-2.300zM1055.300 566.500l2.700-5q1.800-.2 1.600 1.800l-.5 2.800h4q1.300.2 1 1.500l-1.200 5.300q-.3 1.100-1.500 1.100h-6.100" stroke-width="1.100"/>
</svg>
</div>
</div>
</body>
</html>
